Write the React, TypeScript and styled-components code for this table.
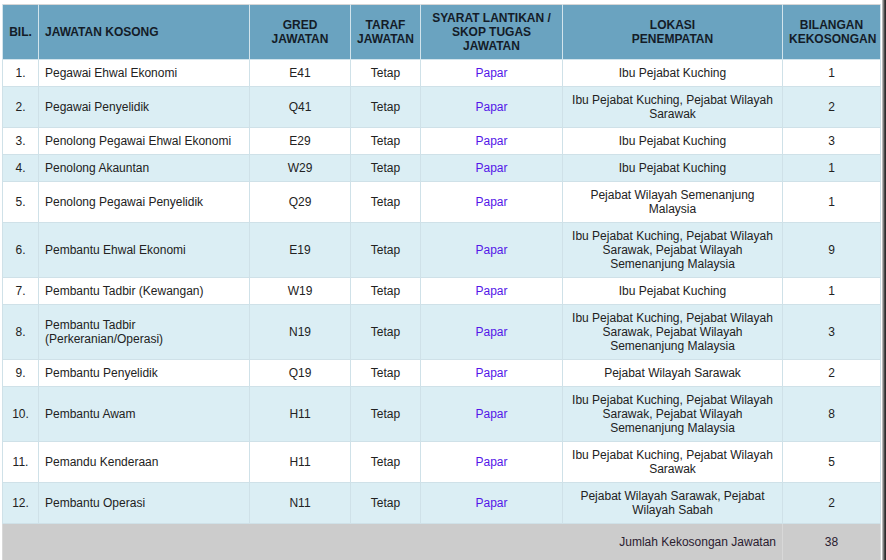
import React from 'react';
import styled, { createGlobalStyle } from 'styled-components';

interface Vacancy {
  post: string;
  grade: string;
  status: string;
  location: string;
  count: number;
}

const vacancies: Vacancy[] = [
  { post: 'Pegawai Ehwal Ekonomi', grade: 'E41', status: 'Tetap', location: 'Ibu Pejabat Kuching', count: 1 },
  { post: 'Pegawai Penyelidik', grade: 'Q41', status: 'Tetap', location: 'Ibu Pejabat Kuching, Pejabat Wilayah Sarawak', count: 2 },
  { post: 'Penolong Pegawai Ehwal Ekonomi', grade: 'E29', status: 'Tetap', location: 'Ibu Pejabat Kuching', count: 3 },
  { post: 'Penolong Akauntan', grade: 'W29', status: 'Tetap', location: 'Ibu Pejabat Kuching', count: 1 },
  { post: 'Penolong Pegawai Penyelidik', grade: 'Q29', status: 'Tetap', location: 'Pejabat Wilayah Semenanjung Malaysia', count: 1 },
  { post: 'Pembantu Ehwal Ekonomi', grade: 'E19', status: 'Tetap', location: 'Ibu Pejabat Kuching, Pejabat Wilayah Sarawak, Pejabat Wilayah Semenanjung Malaysia', count: 9 },
  { post: 'Pembantu Tadbir (Kewangan)', grade: 'W19', status: 'Tetap', location: 'Ibu Pejabat Kuching', count: 1 },
  { post: 'Pembantu Tadbir (Perkeranian/Operasi)', grade: 'N19', status: 'Tetap', location: 'Ibu Pejabat Kuching, Pejabat Wilayah Sarawak, Pejabat Wilayah Semenanjung Malaysia', count: 3 },
  { post: 'Pembantu Penyelidik', grade: 'Q19', status: 'Tetap', location: 'Pejabat Wilayah Sarawak', count: 2 },
  { post: 'Pembantu Awam', grade: 'H11', status: 'Tetap', location: 'Ibu Pejabat Kuching, Pejabat Wilayah Sarawak, Pejabat Wilayah Semenanjung Malaysia', count: 8 },
  { post: 'Pemandu Kenderaan', grade: 'H11', status: 'Tetap', location: 'Ibu Pejabat Kuching, Pejabat Wilayah Sarawak', count: 5 },
  { post: 'Pembantu Operasi', grade: 'N11', status: 'Tetap', location: 'Pejabat Wilayah Sarawak, Pejabat Wilayah Sabah', count: 2 },
];

const GlobalStyle = createGlobalStyle`
  html, body {
    margin: 0;
    padding: 0;
    background: #fff;
    font-family: "Liberation Sans", Arial, sans-serif;
    overflow: hidden;
  }
`;

const Page = styled.div`
  display: flex;
  width: 886px;
  height: 560px;
  padding: 4px 0 0 2px;
  box-sizing: border-box;
`;

const Table = styled.table`
  width: 880px;
  table-layout: fixed;
  border-collapse: collapse;
  border: 1px solid #d6d6d6;
  font-size: 12px;
  line-height: 14px;
  color: #222;
  align-self: flex-start;
`;

const HeadCell = styled.th<{ $left?: boolean }>`
  background: #6aa3c0;
  color: #141c28;
  font-weight: bold;
  padding: 6px 6px;
  height: 42px;
  text-align: ${(p) => (p.$left ? 'left' : 'center')};
  border: 1px solid #d2e4ec;
  border-top: none;
`;

const Row = styled.tr<{ $alt: boolean }>`
  background: ${(p) => (p.$alt ? '#dbeef4' : '#ffffff')};
`;

const Cell = styled.td<{ $left?: boolean }>`
  padding: 6px 6px;
  text-align: ${(p) => (p.$left ? 'left' : 'center')};
  border: 1px solid #cfe1e8;
  vertical-align: middle;
`;

const Link = styled.a`
  color: #5417e8;
  text-decoration: none;
  cursor: pointer;
`;

const FootRow = styled.tr`
  background: #cccccc;
`;

const FootCell = styled.td<{ $right?: boolean }>`
  padding: 11px 6px;
  text-align: ${(p) => (p.$right ? 'right' : 'center')};
  border: 1px solid #d8d8d8;
  color: #2a2030;
`;

const Edge = styled.div`
  width: 4px;
  margin-left: 1px;
  margin-top: -4px;
  align-self: stretch;
  background: linear-gradient(to right, #d0d0d0, #3a3a3a 70%, #222);
`;

const App: React.FC = () => {
  const total = vacancies.reduce((sum, v) => sum + v.count, 0);
  return (
    <>
      <GlobalStyle />
      <Page>
        <Table>
          <colgroup>
            <col style={{ width: 36 }} />
            <col style={{ width: 211 }} />
            <col style={{ width: 101 }} />
            <col style={{ width: 70 }} />
            <col style={{ width: 142 }} />
            <col style={{ width: 220 }} />
            <col style={{ width: 98 }} />
          </colgroup>
          <thead>
            <tr>
              <HeadCell>BIL.</HeadCell>
              <HeadCell $left>JAWATAN KOSONG</HeadCell>
              <HeadCell>GRED<br />JAWATAN</HeadCell>
              <HeadCell>TARAF<br />JAWATAN</HeadCell>
              <HeadCell>SYARAT LANTIKAN / SKOP TUGAS JAWATAN</HeadCell>
              <HeadCell>LOKASI<br />PENEMPATAN</HeadCell>
              <HeadCell>BILANGAN<br />KEKOSONGAN</HeadCell>
            </tr>
          </thead>
          <tbody>
            {vacancies.map((v, i) => (
              <Row key={i} $alt={i % 2 === 1}>
                <Cell>{i + 1}.</Cell>
                <Cell $left>{v.post}</Cell>
                <Cell>{v.grade}</Cell>
                <Cell>{v.status}</Cell>
                <Cell><Link>Papar</Link></Cell>
                <Cell>{v.location}</Cell>
                <Cell>{v.count}</Cell>
              </Row>
            ))}
            <FootRow>
              <FootCell colSpan={6} $right>Jumlah Kekosongan Jawatan</FootCell>
              <FootCell>{total}</FootCell>
            </FootRow>
          </tbody>
        </Table>
        <Edge />
      </Page>
    </>
  );
};

export default App;
